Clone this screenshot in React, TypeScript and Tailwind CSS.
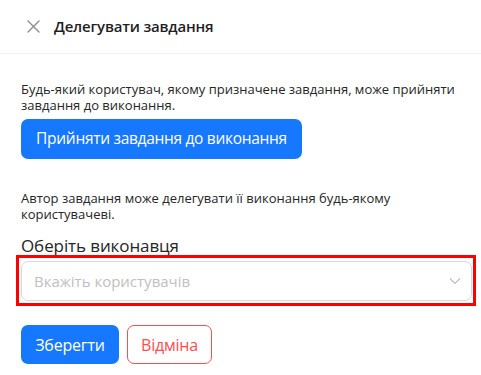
import React from "react";

const App: React.FC = () => {
  return (
    <div
      className="relative w-[481px] h-[375px] bg-white overflow-hidden text-[#1f1f1f]"
      style={{ fontFamily: '"Open Sans", "Noto Sans", sans-serif' }}
    >
      {/* Header */}
      <div className="h-[54px] border-b border-[#f0f0f0] flex items-center pl-[27px]">
        <svg width="13" height="13" viewBox="0 0 13 13" className="shrink-0">
          <path d="M1 1L12 12M12 1L1 12" stroke="#8c8c8c" strokeWidth="1.4" strokeLinecap="round" />
        </svg>
        <span className="ml-[14px] text-[15px] font-semibold leading-none tracking-[-0.2px]">
          Делегувати завдання
        </span>
      </div>

      {/* Body */}
      <div className="pl-[21px] pr-[9px]">
        <p className="mt-[27px] text-[13px] leading-[16px] text-[#262626]">
          Будь-який користувач, якому призначене завдання, може прийняти завдання до виконання.
        </p>
        <button className="mt-[6px] h-[40px] w-[281px] rounded-[7px] bg-[#1677ff] text-white text-[15.5px] tracking-[-0.3px] whitespace-nowrap flex items-center justify-center">
          Прийняти завдання до виконання
        </button>

        <p className="mt-[31px] text-[13px] leading-[16px] text-[#262626] pr-[40px]">
          Автор завдання може делегувати її виконання будь-якому користувачеві.
        </p>
        <div className="mt-[12px] text-[17px] leading-[24px] tracking-[-0.1px] text-[#262626]">Оберіть виконавця</div>

        <div className="mt-[3px] h-[40px] w-[451px] rounded-[7px] border border-[#d9d9d9] flex items-center justify-between pl-[12px] pr-[10px]">
          <span className="text-[15px] text-[#bfbfbf]">Вкажіть користувачів</span>
          <svg width="12" height="8" viewBox="0 0 12 8">
            <path d="M1 1.5L6 6.5L11 1.5" fill="none" stroke="#bfbfbf" strokeWidth="1.2" />
          </svg>
        </div>

        <div className="mt-[24px] flex gap-[8px]">
          <button className="h-[39px] w-[98px] rounded-[7px] bg-[#1677ff] text-white text-[16px] tracking-[-0.2px] flex items-center justify-center">
            Зберегти
          </button>
          <button className="h-[39px] w-[85px] rounded-[7px] border border-[#ff4d4f] text-[#ff4d4f] text-[16px] tracking-[-0.2px] flex items-center justify-center">
            Відміна
          </button>
        </div>
      </div>

      {/* Highlight annotation */}
      <div className="absolute left-[16px] top-[255px] w-[460px] h-[51px] border-[3px] border-[#ff0000] pointer-events-none" />
    </div>
  );
};

export default App;
